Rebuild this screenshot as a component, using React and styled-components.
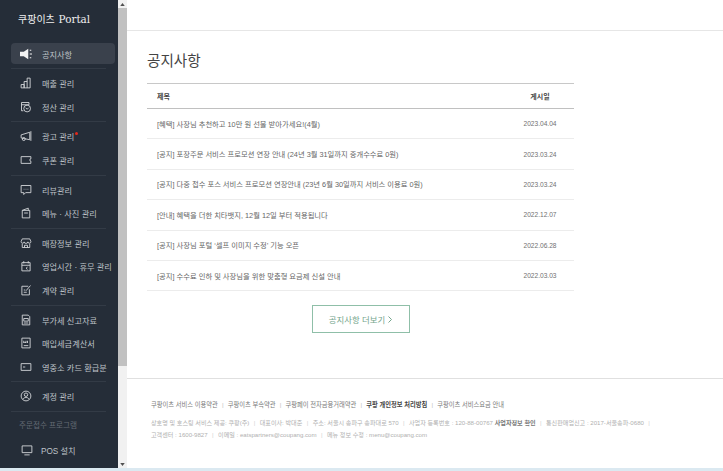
import React from "react";
import styled, { createGlobalStyle } from "styled-components";

const Global = createGlobalStyle`
  html, body { margin: 0; padding: 0; height: 100%; background: #fff; overflow: hidden; }
  * { box-sizing: border-box; }
  #root { height: 471px; }
  body { font-family: "Liberation Sans", "Noto Sans CJK KR", sans-serif; }
`;

const Page = styled.div`
  display: flex;
  flex-direction: column;
  width: 723px;
  height: 471px;
  overflow: hidden;
`;
const Body = styled.div`
  display: flex;
  height: 468px;
`;
const BottomEdge = styled.div`
  height: 3px;
  background: #dbe9f1;
`;
const Sidebar = styled.nav`
  width: 118px;
  flex: none;
  height: 468px;
  overflow: hidden;
  background: #252d38;
  padding: 13px 3px 0 11px;
`;
const Logo = styled.div`
  padding-left: 7px;
  height: 30px;
  font-size: 10px;
  font-weight: 400;
  line-height: 13px;
  color: #f0f0f0;
  white-space: nowrap;
  span { font-family: "DejaVu Serif", serif; font-size: 10.4px; margin-left: 1px; }
`;
const Item = styled.div`
  display: flex;
  align-items: center;
  height: ${p => p.$active ? "21px" : "23.5px"};
  padding-left: ${p => p.$gap ? 10 : 9}px;
  gap: ${p => p.$gap || 10}px;
  border-radius: 4px;
  background: ${p => p.$active ? "#3a414c" : "transparent"};
  color: #bfc3c8;
  font-size: 8.2px;
  white-space: nowrap;
  svg { flex: none; width: 12px; height: 12px; }
`;
const Dot = styled.i`
  display: inline-block;
  width: 3px;
  height: 3px;
  border-radius: 50%;
  background: #e5291c;
  margin-left: 1px;
  vertical-align: 5px;
`;
const Divider = styled.div`
  height: 1px;
  background: #333b46;
  margin: 3px 0 2.3px;
  width: 95px;
`;
const FirstDivider = styled(Divider)`
  margin: 3.5px 0 2.75px;
`;
const GroupLabel = styled.div`
  height: 23.75px;
  line-height: 21px;
  padding-left: 8px;
  color: #646b74;
  font-size: 7.6px;
  white-space: nowrap;
`;
const Track = styled.div`
  width: 9px;
  flex: none;
  height: 468px;
  background: #f1f1f1;
  display: flex;
  flex-direction: column;
  align-items: stretch;
`;
const Arrow = styled.div`
  height: 8px;
  flex: none;
  display: flex;
  align-items: center;
  justify-content: center;
  svg { width: 5px; height: 3px; fill: #505050; }
`;
const Thumb = styled.div`
  height: 358px;
  background: #c1c1c1;
`;
const TrackRest = styled.div` flex: 1; `;
const Main = styled.main`
  flex: 1;
  min-width: 0;
  display: flex;
  flex-direction: column;
`;
const TopBar = styled.div`
  height: 31px;
  flex: none;
  border-bottom: 1px solid #e6e6e6;
`;
const Content = styled.section`
  height: 347px;
  flex: none;
  padding: 20px 0 0 20px;
`;
const Title = styled.h1`
  margin: 0;
  height: 32px;
  font-size: 14.6px;
  line-height: 20px;
  font-weight: 400;
  color: #444;
`;
const Table = styled.div`
  width: 427px;
  border-top: 1px solid #c8c8c8;
`;
const HeadRow = styled.div`
  display: flex;
  justify-content: space-between;
  align-items: center;
  height: 25px;
  padding: 0 17px 0 10px;
  border-bottom: 1px solid #c0c0c0;
  font-size: 7px;
  font-weight: 700;
  color: #444;
`;
const Row = styled.div`
  display: flex;
  justify-content: space-between;
  align-items: center;
  height: 30.4px;
  padding: 0 17px 0 10px;
  border-bottom: 1px solid #ececec;
  font-size: 7.3px;
  color: #666;
  white-space: nowrap;
`;
const DateCell = styled.span`
  width: 34px;
  text-align: center;
  font-size: 6.6px;
  color: #707070;
`;
const HeadDate = styled.span`
  width: 34px;
  text-align: center;
`;
const MoreWrap = styled.div`
  display: flex;
  justify-content: center;
  width: 427px;
  padding-top: 14px;
`;
const More = styled.button`
  display: flex;
  align-items: center;
  justify-content: center;
  gap: 3px;
  width: 98px;
  height: 28px;
  background: #fff;
  border: 1px solid #8fbfa8;
  color: #74a58c;
  font-family: inherit;
  font-size: 8.4px;
  padding: 0;
  svg { width: 4px; height: 7px; fill: none; stroke: #74a58c; stroke-width: 1; }
`;
const Footer = styled.footer`
  flex: 1;
  border-top: 1px solid #e0e0e0;
  padding: 21px 0 0 24px;
`;
const Links = styled.div`
  font-size: 6.25px;
  line-height: 9px;
  color: #777;
  white-space: nowrap;
  margin-bottom: 8px;
  b { font-weight: 700; color: #444; }
  em { font-style: normal; color: #bbb; margin: 0 4.2px; }
`;
const Info = styled.div`
  font-size: 6.1px;
  line-height: 12px;
  color: #b0b0b0;
  white-space: nowrap;
  b { font-weight: 700; color: #777; }
  em { font-style: normal; color: #d0d0d0; margin: 0 4.4px; }
`;

const S = { fill: "none", stroke: "#d4d6d9", strokeWidth: 1.2, viewBox: "0 0 16 16" };
const icons = {
  speaker: <svg viewBox="0 0 16 16"><path d="M0 5h5l6-4v14l-6-4H0z" fill="#f2f2f2" /><path d="M13 3h2M13 8h3M13 13h2" stroke="#f2f2f2" fill="none" strokeWidth="1.5" /></svg>,
  chart: <svg {...S}><path d="M1.500 14.500V10h4v4.500M5.500 14.500V6h4M9.500 1.500h4v13h-12M9.500 1.500v13" /></svg>,
  settle: <svg {...S}><path d="M12 5V2H2v11h2.500M2 5h10" /><circle cx="9.500" cy="10" r="4.500" /><path d="M7.500 9l2 2 2-2" /></svg>,
  ad: <svg {...S}><path d="M1.500 6.500L13 3v10L6 11.500l-4.500-1z" /><circle cx="5" cy="12" r="2" /><path d="M14.500 1.500v13" /></svg>,
  coupon: <svg {...S}><path d="M1.500 3.500h13v3a1.500 1.500 0 000 3v3h-13z" /></svg>,
  chat: <svg {...S}><path d="M1.500 2h13v9.500h-7L5 14v-2.500H1.500z" /><path d="M5 7h.8M7.600 7h.8M10.200 7h.8" /></svg>,
  menu: <svg {...S}><path d="M3 4.500h10V14.500H3zM3 4.500L11 1.500v3" /><path d="M5.500 8h5" /></svg>,
  store: <svg {...S}><path d="M3 2.500h10l1.500 3.500a2 2 0 01-4 .5 2.500 2 0 01-5 0 2 2 0 01-4-.5z" /><path d="M3 9v5h10V9M6 14v-3h4v3" /></svg>,
  time: <svg {...S}><path d="M2.500 3.500h11V14.500h-11zM5 1.500v3M11 1.500v3M2.500 7h11" /><path d="M10 12.500l-2-1.500L10 9.500" /></svg>,
  contract: <svg {...S}><path d="M11 3H2.500v11.500h10V7" /><path d="M8 9l6-7M5 8h2M5 11h4" /></svg>,
  tax: <svg {...S}><path d="M3 1.500h8l2 2v11H3z" /><path d="M5 6h6v3.500H5zM5 12h6" /></svg>,
  bill: <svg {...S}><path d="M2.500 1.500h11v13h-11z" /><path d="M5 5v3l1.500-1.500L8 8V5M10 5v3M5 11.500h6" /></svg>,
  card: <svg {...S}><path d="M1.500 3.500h13v9h-13z" /><path d="M4 8h3" /></svg>,
  user: <svg {...S}><circle cx="8" cy="8" r="6.500" /><circle cx="8" cy="6.300" r="2.300" /><path d="M3.800 12.500c1-2 2.500-2.500 4.200-2.500s3.200 .5 4.200 2.500" /></svg>,
  pos: <svg {...S}><path d="M1.500 2.500h13v9h-13zM4.500 14.500h7" /></svg>,
};

function Nav({ icon, children, ...rest }) {
  return <Item {...rest}>{icons[icon]}<span>{children}</span></Item>;
}

const notices = [
  ["[혜택] 사장님 추천하고 10만 원 선물 받아가세요!(4월)", "2023.04.04"],
  ["[공지] 포장주문 서비스 프로모션 연장 안내 (24년 3월 31일까지 중개수수료 0원)", "2023.03.24"],
  ["[공지] 다중 접수 포스 서비스 프로모션 연장안내 (23년 6월 30일까지 서비스 이용료 0원)", "2023.03.24"],
  ["[안내] 혜택을 더한 치타뱃지, 12월 12일 부터 적용됩니다", "2022.12.07"],
  ["[공지] 사장님 포털 ‘셀프 이미지 수정’ 기능 오픈", "2022.06.28"],
  ["[공지] 수수료 인하 및 사장님을 위한 맞춤형 요금제 신설 안내", "2022.03.03"],
];

export default function App() {
  return (
    <Page>
      <Global />
      <Body>
        <Sidebar>
          <Logo>쿠팡이츠 <span>Portal</span></Logo>
          <Nav icon="speaker" $active>공지사항</Nav>
          <FirstDivider />
          <Nav icon="chart">매출 관리</Nav>
          <Nav icon="settle">정산 관리</Nav>
          <Divider />
          <Nav icon="ad">광고 관리<Dot /></Nav>
          <Nav icon="coupon">쿠폰 관리</Nav>
          <Divider />
          <Nav icon="chat">리뷰관리</Nav>
          <Nav icon="menu">메뉴 · 사진 관리</Nav>
          <Divider />
          <Nav icon="store">매장정보 관리</Nav>
          <Nav icon="time">영업시간 · 휴무 관리</Nav>
          <Nav icon="contract">계약 관리</Nav>
          <Divider />
          <Nav icon="tax">부가세 신고자료</Nav>
          <Nav icon="bill">매입세금계산서</Nav>
          <Nav icon="card">영중소 카드 환급분</Nav>
          <Divider />
          <Nav icon="user">계정 관리</Nav>
          <Divider />
          <GroupLabel>주문접수 프로그램</GroupLabel>
          <Nav icon="pos" $gap={8}>POS 설치</Nav>
        </Sidebar>
        <Track>
          <Arrow><svg viewBox="0 0 6 4"><path d="M3 0l3 4H0z" /></svg></Arrow>
          <Thumb />
          <TrackRest />
          <Arrow><svg viewBox="0 0 6 4"><path d="M0 0h6L3 4z" /></svg></Arrow>
        </Track>
        <Main>
          <TopBar />
          <Content>
            <Title>공지사항</Title>
            <Table>
              <HeadRow><span>제목</span><HeadDate>게시일</HeadDate></HeadRow>
              {notices.map(([t, d]) => (
                <Row key={t}><span>{t}</span><DateCell>{d}</DateCell></Row>
              ))}
            </Table>
            <MoreWrap>
              <More>공지사항 더보기<svg viewBox="0 0 4 7"><path d="M.5.500L3.500 3.500.5 6.500" /></svg></More>
            </MoreWrap>
          </Content>
          <Footer>
            <Links>
              쿠팡이츠 서비스 이용약관<em>|</em>쿠팡이츠 부속약관<em>|</em>쿠팡페이 전자금융거래약관<em>|</em><b>쿠팡 개인정보 처리방침</b><em>|</em>쿠팡이츠 서비스요금 안내
            </Links>
            <Info>
              상호명 및 호스팅 서비스 제공: 쿠팡(주)<em>|</em>대표이사: 박대준<em>|</em>주소: 서울시 송파구 송파대로 570<em>|</em>사업자 등록번호 : 120-88-00767 <b>사업자정보 확인</b><em>|</em>통신판매업신고 : 2017-서울송파-0680<em>|</em>
            </Info>
            <Info>
              고객센터 : 1600-9827<em>|</em>이메일 : eatspartners@coupang.com<em>|</em>메뉴 정보 수정 : menu@coupang.com
            </Info>
          </Footer>
        </Main>
      </Body>
      <BottomEdge />
    </Page>
  );
}
